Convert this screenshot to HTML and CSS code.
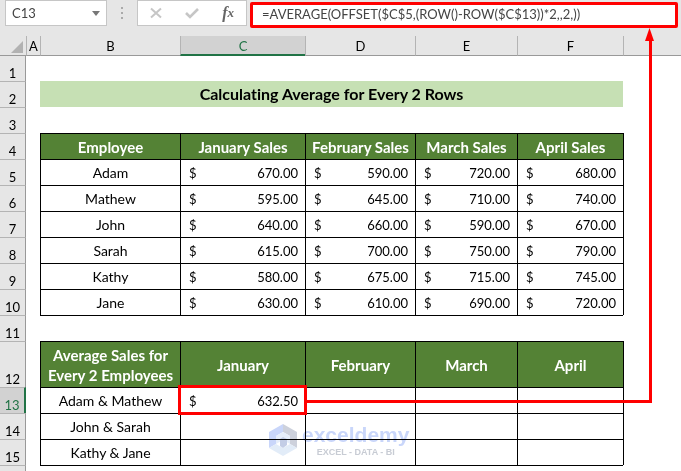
FILE: index.html
```html
<!DOCTYPE html>
<html lang="en">
<head>
    <meta charset="UTF-8">
    <meta name="viewport" content="width=device-width, initial-scale=1.0">
    <title>Calculating Average for Every 2 Rows</title>
    <link rel="stylesheet" href="styles.css">
</head>
<body>

<header class="formula-bar">
    <div class="name-box">
        <input type="text" class="name-input" value="C13" aria-label="Name box">
        <button type="button" class="drop-button" aria-label="Show names">
            <svg width="8" height="5" viewBox="0 0 8 5"><path d="M0 0h8L4 5z" fill="#777"/></svg>
        </button>
    </div>
    <div class="dots"><i></i><i></i><i></i></div>
    <div class="tools">
        <button type="button" aria-label="Cancel">
            <svg width="12" height="12" viewBox="0 0 12 12"><path d="M1 1.5l10 9M11 1.5l-10 9" fill="none" stroke="#c6c6c6" stroke-width="2"/></svg>
        </button>
        <button type="button" aria-label="Enter">
            <svg width="14" height="12" viewBox="0 0 14 12"><path d="M1 6l4 4 8-8" fill="none" stroke="#c6c6c6" stroke-width="2.6"/></svg>
        </button>
        <button type="button" class="fx" aria-label="Insert function">f<sub>x</sub></button>
    </div>
    <input type="text" class="formula-input" value="=AVERAGE(OFFSET($C$5,(ROW()-ROW($C$13))*2,,2,))" aria-label="Formula">
</header>

<main class="sheet">
    <table>
        <colgroup>
            <col class="col-head"><col class="col-a"><col class="col-b"><col class="col-c">
            <col class="col-d"><col class="col-e"><col class="col-f"><col>
        </colgroup>
        <thead>
            <tr>
                <th class="corner"><svg width="12" height="12" viewBox="0 0 12 12"><path d="M12 0v12H0z" fill="#b2b2b2"/></svg></th>
                <th>A</th><th>B</th><th class="active">C</th><th>D</th><th>E</th><th>F</th><th></th>
            </tr>
        </thead>
        <tbody>
            <tr class="first"><th>1</th><td colspan="7"></td></tr>
            <tr><th>2</th><td></td><td class="title" colspan="5">Calculating Average for Every 2 Rows</td><td></td></tr>
            <tr><th>3</th><td colspan="7"></td></tr>
            <tr class="heading">
                <th>4</th><td></td>
                <td class="cell">Employee</td><td class="cell">January Sales</td><td class="cell">February Sales</td><td class="cell">March Sales</td><td class="cell">April Sales</td>
                <td class="edge"></td>
            </tr>
            <tr>
                <th>5</th><td></td><td class="cell">Adam</td>
                <td class="cell"><div class="money"><span>$</span><span>670.00</span></div></td>
                <td class="cell"><div class="money"><span>$</span><span>590.00</span></div></td>
                <td class="cell"><div class="money"><span>$</span><span>720.00</span></div></td>
                <td class="cell"><div class="money"><span>$</span><span>680.00</span></div></td>
                <td class="edge"></td>
            </tr>
            <tr>
                <th>6</th><td></td><td class="cell">Mathew</td>
                <td class="cell"><div class="money"><span>$</span><span>595.00</span></div></td>
                <td class="cell"><div class="money"><span>$</span><span>645.00</span></div></td>
                <td class="cell"><div class="money"><span>$</span><span>710.00</span></div></td>
                <td class="cell"><div class="money"><span>$</span><span>740.00</span></div></td>
                <td class="edge"></td>
            </tr>
            <tr>
                <th>7</th><td></td><td class="cell">John</td>
                <td class="cell"><div class="money"><span>$</span><span>640.00</span></div></td>
                <td class="cell"><div class="money"><span>$</span><span>660.00</span></div></td>
                <td class="cell"><div class="money"><span>$</span><span>590.00</span></div></td>
                <td class="cell"><div class="money"><span>$</span><span>670.00</span></div></td>
                <td class="edge"></td>
            </tr>
            <tr>
                <th>8</th><td></td><td class="cell">Sarah</td>
                <td class="cell"><div class="money"><span>$</span><span>615.00</span></div></td>
                <td class="cell"><div class="money"><span>$</span><span>700.00</span></div></td>
                <td class="cell"><div class="money"><span>$</span><span>750.00</span></div></td>
                <td class="cell"><div class="money"><span>$</span><span>790.00</span></div></td>
                <td class="edge"></td>
            </tr>
            <tr>
                <th>9</th><td></td><td class="cell">Kathy</td>
                <td class="cell"><div class="money"><span>$</span><span>580.00</span></div></td>
                <td class="cell"><div class="money"><span>$</span><span>675.00</span></div></td>
                <td class="cell"><div class="money"><span>$</span><span>715.00</span></div></td>
                <td class="cell"><div class="money"><span>$</span><span>745.00</span></div></td>
                <td class="edge"></td>
            </tr>
            <tr>
                <th>10</th><td></td><td class="cell">Jane</td>
                <td class="cell"><div class="money"><span>$</span><span>630.00</span></div></td>
                <td class="cell"><div class="money"><span>$</span><span>610.00</span></div></td>
                <td class="cell"><div class="money"><span>$</span><span>690.00</span></div></td>
                <td class="cell"><div class="money"><span>$</span><span>720.00</span></div></td>
                <td class="edge"></td>
            </tr>
            <tr><th>11</th><td></td><td class="below" colspan="5"></td><td></td></tr>
            <tr class="heading tall">
                <th>12</th><td></td>
                <td class="cell">Average Sales for<br>Every 2 Employees</td><td class="cell">January</td><td class="cell">February</td><td class="cell">March</td><td class="cell">April</td>
                <td class="edge"></td>
            </tr>
            <tr>
                <th class="active">13</th><td></td><td class="cell">Adam &amp; Mathew</td>
                <td class="cell selected"><div class="money"><span>$</span><span>632.50</span></div></td>
                <td class="cell"></td><td class="cell"></td><td class="cell"></td>
                <td class="edge"></td>
            </tr>
            <tr>
                <th>14</th><td></td><td class="cell">John &amp; Sarah</td>
                <td class="cell"></td><td class="cell"></td><td class="cell"></td><td class="cell"></td>
                <td class="edge"></td>
            </tr>
            <tr>
                <th>15</th><td></td><td class="cell">Kathy &amp; Jane</td>
                <td class="cell"></td><td class="cell"></td><td class="cell"></td><td class="cell"></td>
                <td class="edge"></td>
            </tr>
            <tr><th></th><td></td><td class="below" colspan="5"></td><td></td></tr>
        </tbody>
    </table>
</main>

<!-- Arrow from the result cell to its formula -->
<svg class="arrow" width="349" height="375" viewBox="0 0 349 375">
    <path d="M0 373.5H344.5V12" fill="none" stroke="#f00" stroke-width="3"/>
    <path d="M343.5 0L348 13H339z" fill="#f00"/>
</svg>

<div class="watermark">
    <svg width="28" height="32" viewBox="0 0 28 32">
        <path d="M14 0L0 8v16l7-4v-8l7-4z" fill="#c9d6fa"/>
        <path d="M14 0l14 8v16l-7-4v-8l-7-4z" fill="#cdd1dc"/>
        <path d="M0 24l7-4 7 4 7-4 7 4-14 8z" fill="#e2ecf8"/>
        <path d="M14 8l7 4v8l-7-4-7 4v-8z" fill="#e6eefb"/>
        <path d="M14 13l4 2v6l-4 3-3-2v-7z" fill="#c3cde6"/>
    </svg>
    <div class="brand">
        <span class="brand-name">exceldemy</span>
        <span class="brand-tag">EXCEL - DATA - BI</span>
    </div>
</div>

</body>
</html>
```
FILE: styles.css
```css
* {
    box-sizing: border-box;
    margin: 0;
    padding: 0;
}

body {
    position: relative;
    display: flex;
    flex-direction: column;
    height: 100vh;
    overflow: hidden;
    font-family: Lato, Carlito, Calibri, sans-serif;
    font-size: 14px;
    font-variant-ligatures: none;
    color: #000;
    background-color: #fff;
}

input, button {
    font-family: inherit;
    color: #444;
    border: none;
    background: none;
    outline: none;
}

/* Formula bar */
.formula-bar {
    display: flex;
    align-items: flex-start;
    flex: none;
    height: 36px;
    padding: 0 3px 0 5px;
    background-color: #e6e6e6;
}

.name-box, .tools {
    display: flex;
    align-items: center;
    height: 26px;
    background-color: #fff;
    border: 1px solid #c6c6c6;
}

.name-box {
    width: 102px;
    padding: 0 6px;
}

.name-input {
    flex: 1;
    min-width: 0;
    font-size: 13px;
}

.drop-button {
    display: flex;
}

.dots {
    display: flex;
    flex-direction: column;
    align-items: center;
    justify-content: center;
    gap: 3px;
    width: 30px;
    height: 26px;
}

.dots i {
    width: 2px;
    height: 2px;
    background-color: #aaa;
}

.tools {
    justify-content: space-between;
    width: 110px;
    padding: 0 12px;
}

.tools button {
    display: flex;
    align-items: center;
}

.tools .fx {
    font-family: "Liberation Serif", serif;
    font-size: 16px;
    font-style: italic;
    font-weight: bold;
    line-height: 18px;
    color: #666;
}

.fx sub {
    font-size: 13px;
    line-height: 12px;
}

.formula-input {
    flex: 1;
    min-width: 0;
    height: 26px;
    margin: 2px 0 0 3px;
    padding: 0 9px 2px;
    font-size: 13px;
    background-color: #fff;
    border: 3px solid #f00;
    border-radius: 2px;
}

/* Sheet grid */
.sheet {
    flex: 1;
    min-height: 0;
    overflow: hidden;
}

table {
    width: 100%;
    table-layout: fixed;
    border-collapse: separate;
    border-spacing: 0;
}

.col-head { width: 26px; }
.col-a { width: 14px; }
.col-b { width: 140px; }
.col-c { width: 125px; }
.col-d { width: 110px; }
.col-e { width: 102px; }
.col-f { width: 106px; }

th {
    font-size: 13px;
    font-weight: normal;
    line-height: 16px;
    background-color: #e6e6e6;
}

thead th {
    height: 20px;
    border-left: 1px solid #b4b4b4;
    border-bottom: 1px solid #999;
}

thead .corner {
    padding: 2px 3px 0 0;
    line-height: 0;
    text-align: right;
    border-left: none;
}

thead th.active {
    padding-top: 1px;
    color: #217346;
    background-color: #d2d2d2;
    border-bottom: 2px solid #217346;
}

tbody tr {
    height: 26px;
}

tbody .first {
    height: 25px;
}

tbody .tall {
    height: 46px;
}

tbody th {
    vertical-align: bottom;
    border-top: 1px solid #b4b4b4;
    border-right: 1px solid #999;
}

.first th {
    border-top: none;
}

tbody th.active {
    color: #217346;
    background-color: #d2d2d2;
    border-right: 2px solid #217346;
}

td {
    line-height: 20px;
    text-align: center;
    white-space: nowrap;
}

.title {
    font-size: 16px;
    font-weight: bold;
    background-color: #c6e0b4;
}

.cell {
    border-top: 1px solid #000;
    border-left: 1px solid #000;
}

.edge {
    border-left: 1px solid #000;
}

.below {
    border-top: 1px solid #000;
}

.heading .cell {
    font-size: 15px;
    font-weight: bold;
    color: #fff;
    background-color: #548235;
}

.money {
    display: flex;
    justify-content: space-between;
    padding: 0 7px 0 8px;
    font-size: 13px;
}

.selected {
    outline: 3px solid #f00;
    outline-offset: -1px;
}

/* Drawn over the sheet */
.arrow {
    position: absolute;
    top: 28px;
    left: 306px;
}

.watermark {
    position: absolute;
    top: 423px;
    left: 269px;
    display: flex;
    align-items: center;
    gap: 5px;
    mix-blend-mode: multiply;
}

.brand {
    display: flex;
    flex-direction: column;
    align-items: center;
    font-family: "Liberation Sans", Arial, sans-serif;
    font-weight: bold;
}

.brand-name {
    font-size: 21px;
    line-height: 24px;
    color: #c9d6fa;
}

.brand-tag {
    font-size: 9px;
    line-height: 10px;
    color: #c8ccd4;
}
```
